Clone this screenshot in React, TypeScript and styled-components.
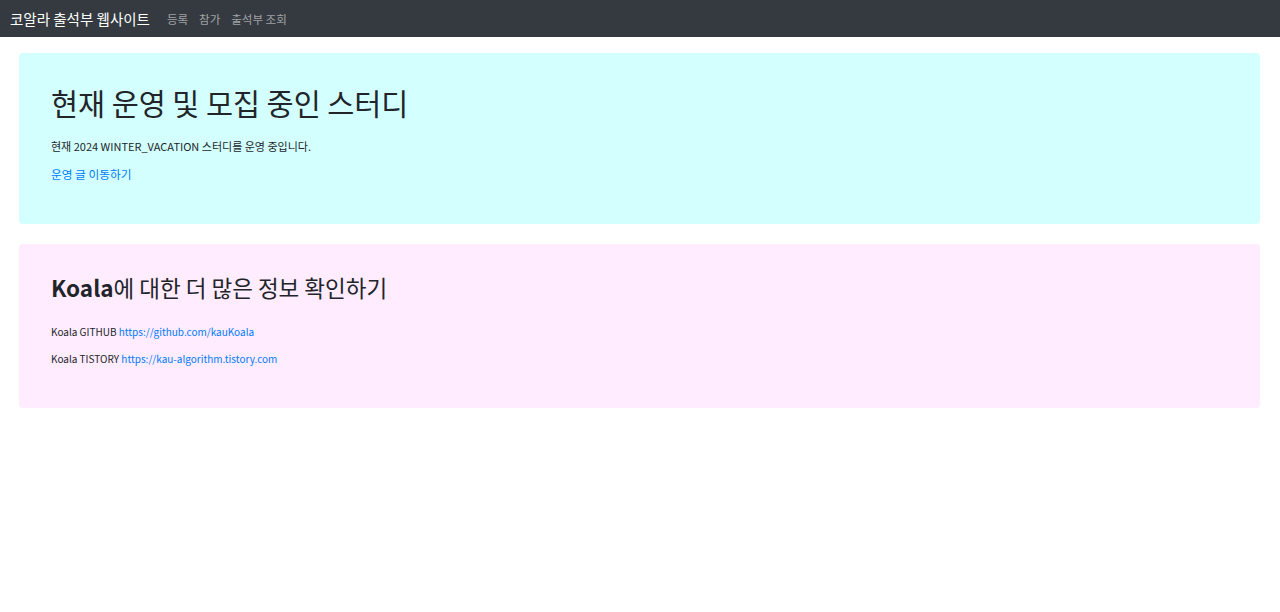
import React from 'react';
import styled, { createGlobalStyle } from 'styled-components';

const GlobalStyle = createGlobalStyle`
  body {
    margin: 0;
    background: #ffffff;
    font-family: "Noto Sans CJK KR", "Noto Sans", sans-serif;
    color: #212529;
  }
  * { box-sizing: border-box; }
`;

const Navbar = styled.nav`
  display: flex;
  align-items: center;
  height: 37px;
  padding: 0 10px;
  background: #343a40;
`;

const Brand = styled.a`
  font-size: 14.5px;
  color: #ffffff;
  margin-right: 17px;
  text-decoration: none;
`;

const NavLinks = styled.div`
  display: flex;
  gap: 11px;
`;

const NavLink = styled.a`
  font-size: 11.5px;
  color: rgba(255, 255, 255, 0.55);
  text-decoration: none;
`;

const Main = styled.main`
  display: flex;
  flex-direction: column;
  gap: 20px;
  padding: 16px 20px 0 19px;
`;

const Panel = styled.section<{ $bg: string; $height: number; $top: number }>`
  background: ${p => p.$bg};
  border-radius: 4px;
  height: ${p => p.$height}px;
  padding: ${p => p.$top}px 32px 0;
`;

const Heading = styled.h1<{ $size: number; $gap: number }>`
  margin: 0 0 ${p => p.$gap}px 0;
  font-size: ${p => p.$size}px;
  font-weight: 400;
  line-height: 1.5;
  color: #212529;
`;

const Strong = styled.span`
  font-weight: 600;
`;

const Line = styled.p<{ $size?: number }>`
  margin: 0 0 10px 0;
  font-size: ${p => p.$size ?? 11}px;
  line-height: 17px;
  color: #212529;
`;

const Link = styled.a`
  color: #007bff;
  text-decoration: none;
`;

export default function App() {
  return (
    <>
      <GlobalStyle />
      <Navbar>
        <Brand href="#">코알라 출석부 웹사이트</Brand>
        <NavLinks>
          <NavLink href="#">등록</NavLink>
          <NavLink href="#">참가</NavLink>
          <NavLink href="#">출석부 조회</NavLink>
        </NavLinks>
      </Navbar>
      <Main>
        <Panel $bg="#d4ffff" $height={171} $top={27}>
          <Heading $size={29.4} $gap={14}>현재 운영 및 모집 중인 스터디</Heading>
          <Line>현재 2024 WINTER_VACATION 스터디를 운영 중입니다.</Line>
          <Line $size={11.7}>
            <Link href="#">운영 글 이동하기</Link>
          </Line>
        </Panel>
        <Panel $bg="#ffecff" $height={164} $top={27}>
          <Heading $size={22.5} $gap={18}>
            <Strong>Koala</Strong>에 대한 더 많은 정보 확인하기
          </Heading>
          <Line $size={10}>
            Koala GITHUB <Link href="#">https://github.com/kauKoala</Link>
          </Line>
          <Line $size={10}>
            Koala TISTORY <Link href="#">https://kau-algorithm.tistory.com</Link>
          </Line>
        </Panel>
      </Main>
    </>
  );
}
